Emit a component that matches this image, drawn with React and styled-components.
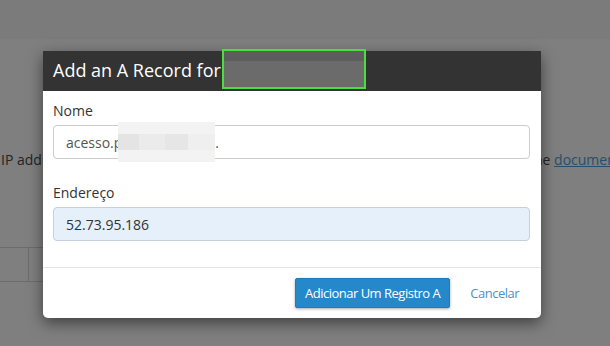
import React from "react";
import styled, { createGlobalStyle } from "styled-components";

const GlobalStyle = createGlobalStyle`
  html, body {
    margin: 0;
    padding: 0;
    background: #fff;
    font-family: "Open Sans", "DejaVu Sans", sans-serif;
  }
  * { box-sizing: border-box; }
`

const Page = styled.div`
  position: relative;
  width: 610px;
  height: 346px;
  overflow: hidden;
  background: #fff;
`
const TopBar = styled.div`
  height: 40px;
  background: #f7f7f7;
  border-bottom: 1px solid #fdfdfd;
`
const Intro = styled.div`
  display: flex;
  width: 610px;
  margin-top: 110px;
  overflow: hidden;
  font-size: 14px;
  line-height: 20px;
  color: #484848;
  white-space: nowrap;
`
const IntroLeft = styled.span`
  flex: none;
  width: 529px;
  padding-left: 1px;
  overflow: hidden;
`
const DocLink = styled.a`
  color: #4c9ed6;
  text-decoration: underline;
`
const Table = styled.div`
  display: flex;
  width: 500px;
  height: 35px;
  margin-top: 77px;
  border-top: 1px solid #d8d8d8;
  border-bottom: 1px solid #d8d8d8;
`
const Cell = styled.div`
  width: ${p => p.$w || "auto"};
  flex: ${p => (p.$w ? "none" : 1)};
  padding: 6px 14px;
  font-size: 14px;
  font-weight: bold;
  color: #333;
  border-right: ${p => (p.$w ? "1px solid #d8d8d8" : "none")};
`
const Backdrop = styled.div`
  position: absolute;
  inset: 0;
  background: rgba(0, 0, 0, 0.5);
  padding: 51px 0 0 43px;
`
const Dialog = styled.div`
  width: 498px;
  background: #fff;
  border-radius: 0 0 5px 5px;
  box-shadow: 0 5px 15px rgba(0, 0, 0, 0.5);
`
const Header = styled.div`
  display: flex;
  align-items: flex-start;
  height: 40px;
  padding: 0 10px;
  background: #333;
`
const Title = styled.h4`
  margin: 0;
  font-size: 18px;
  font-weight: normal;
  line-height: 38px;
  color: #fff;
`
const TitleMask = styled.span`
  width: 144px;
  height: 40px;
  margin: -2px 0 0 1px;
  border: 2px solid #4ade3f;
  background: linear-gradient(to bottom, #5d5d5d 0 10px, #6b6b6b 10px);
`
const Body = styled.div`
  padding: 10px 11px 26px 10px;
`
const Group = styled.div`
  & + & { margin-top: 24px; }
`
const Label = styled.label`
  display: block;
  margin-bottom: 4px;
  font-size: 14px;
  line-height: 20px;
  color: #333;
`
const Field = styled.div`
  display: flex;
  align-items: center;
  height: 34px;
  padding: 0 12px;
  border: 1px solid ${p => (p.$filled ? "#c5d0db" : "#ccc")};
  border-radius: 4px;
  background: ${p => (p.$filled ? "#e6f0fa" : "#fff")};
  font-size: 14px;
  color: ${p => (p.$filled ? "#333" : "#555")};
  white-space: nowrap;
`
const FieldMask = styled.span`
  flex: none;
  width: 97px;
  height: 40px;
  margin-left: -4px;
  background-color: #f3f3f3;
  background-image: linear-gradient(to right, #e4e4e4 0 22%, #ebebeb 22% 48%, #e6e6e6 48% 72%, #efefef 72% 100%);
  background-size: 100% 16px;
  background-position: center 12px;
  background-repeat: no-repeat;
`
const Footer = styled.div`
  display: flex;
  justify-content: flex-end;
  align-items: center;
  gap: 20px;
  padding: 10px 22px 10px 10px;
  border-top: 1px solid #e5e5e5;
`
const Button = styled.button`
  height: 30px;
  padding: 0 9px;
  border: 1px solid #1f7cbb;
  border-radius: 2px;
  background: #2588cb;
  color: #fff;
  font-family: "Open Sans", sans-serif;
  font-size: 13px;
  letter-spacing: -0.5px;
  box-shadow: 0 1px 3px rgba(0, 0, 0, 0.35);
`
const CancelLink = styled.a`
  color: #4f8fc6;
  font-size: 13px;
  letter-spacing: -0.5px;
`

export default function App() {
  return (
    <Page>
      <GlobalStyle />
      <TopBar />
      <Intro>
        <IntroLeft>IP address to which this record should point. For more information, read the</IntroLeft>
        <span>the <DocLink>documentation</DocLink>.</span>
      </Intro>
      <Table>
        <Cell $w="28px" />
        <Cell>Conteúdo</Cell>
      </Table>
      <Backdrop>
        <Dialog>
          <Header>
            <Title>Add an A Record for</Title>
            <TitleMask />
          </Header>
          <Body>
            <Group>
              <Label>Nome</Label>
              <Field>
                acesso.p<FieldMask />.
              </Field>
            </Group>
            <Group>
              <Label>Endereço</Label>
              <Field $filled>52.73.95.186</Field>
            </Group>
          </Body>
          <Footer>
            <Button>Adicionar Um Registro A</Button>
            <CancelLink>Cancelar</CancelLink>
          </Footer>
        </Dialog>
      </Backdrop>
    </Page>
  );
}
